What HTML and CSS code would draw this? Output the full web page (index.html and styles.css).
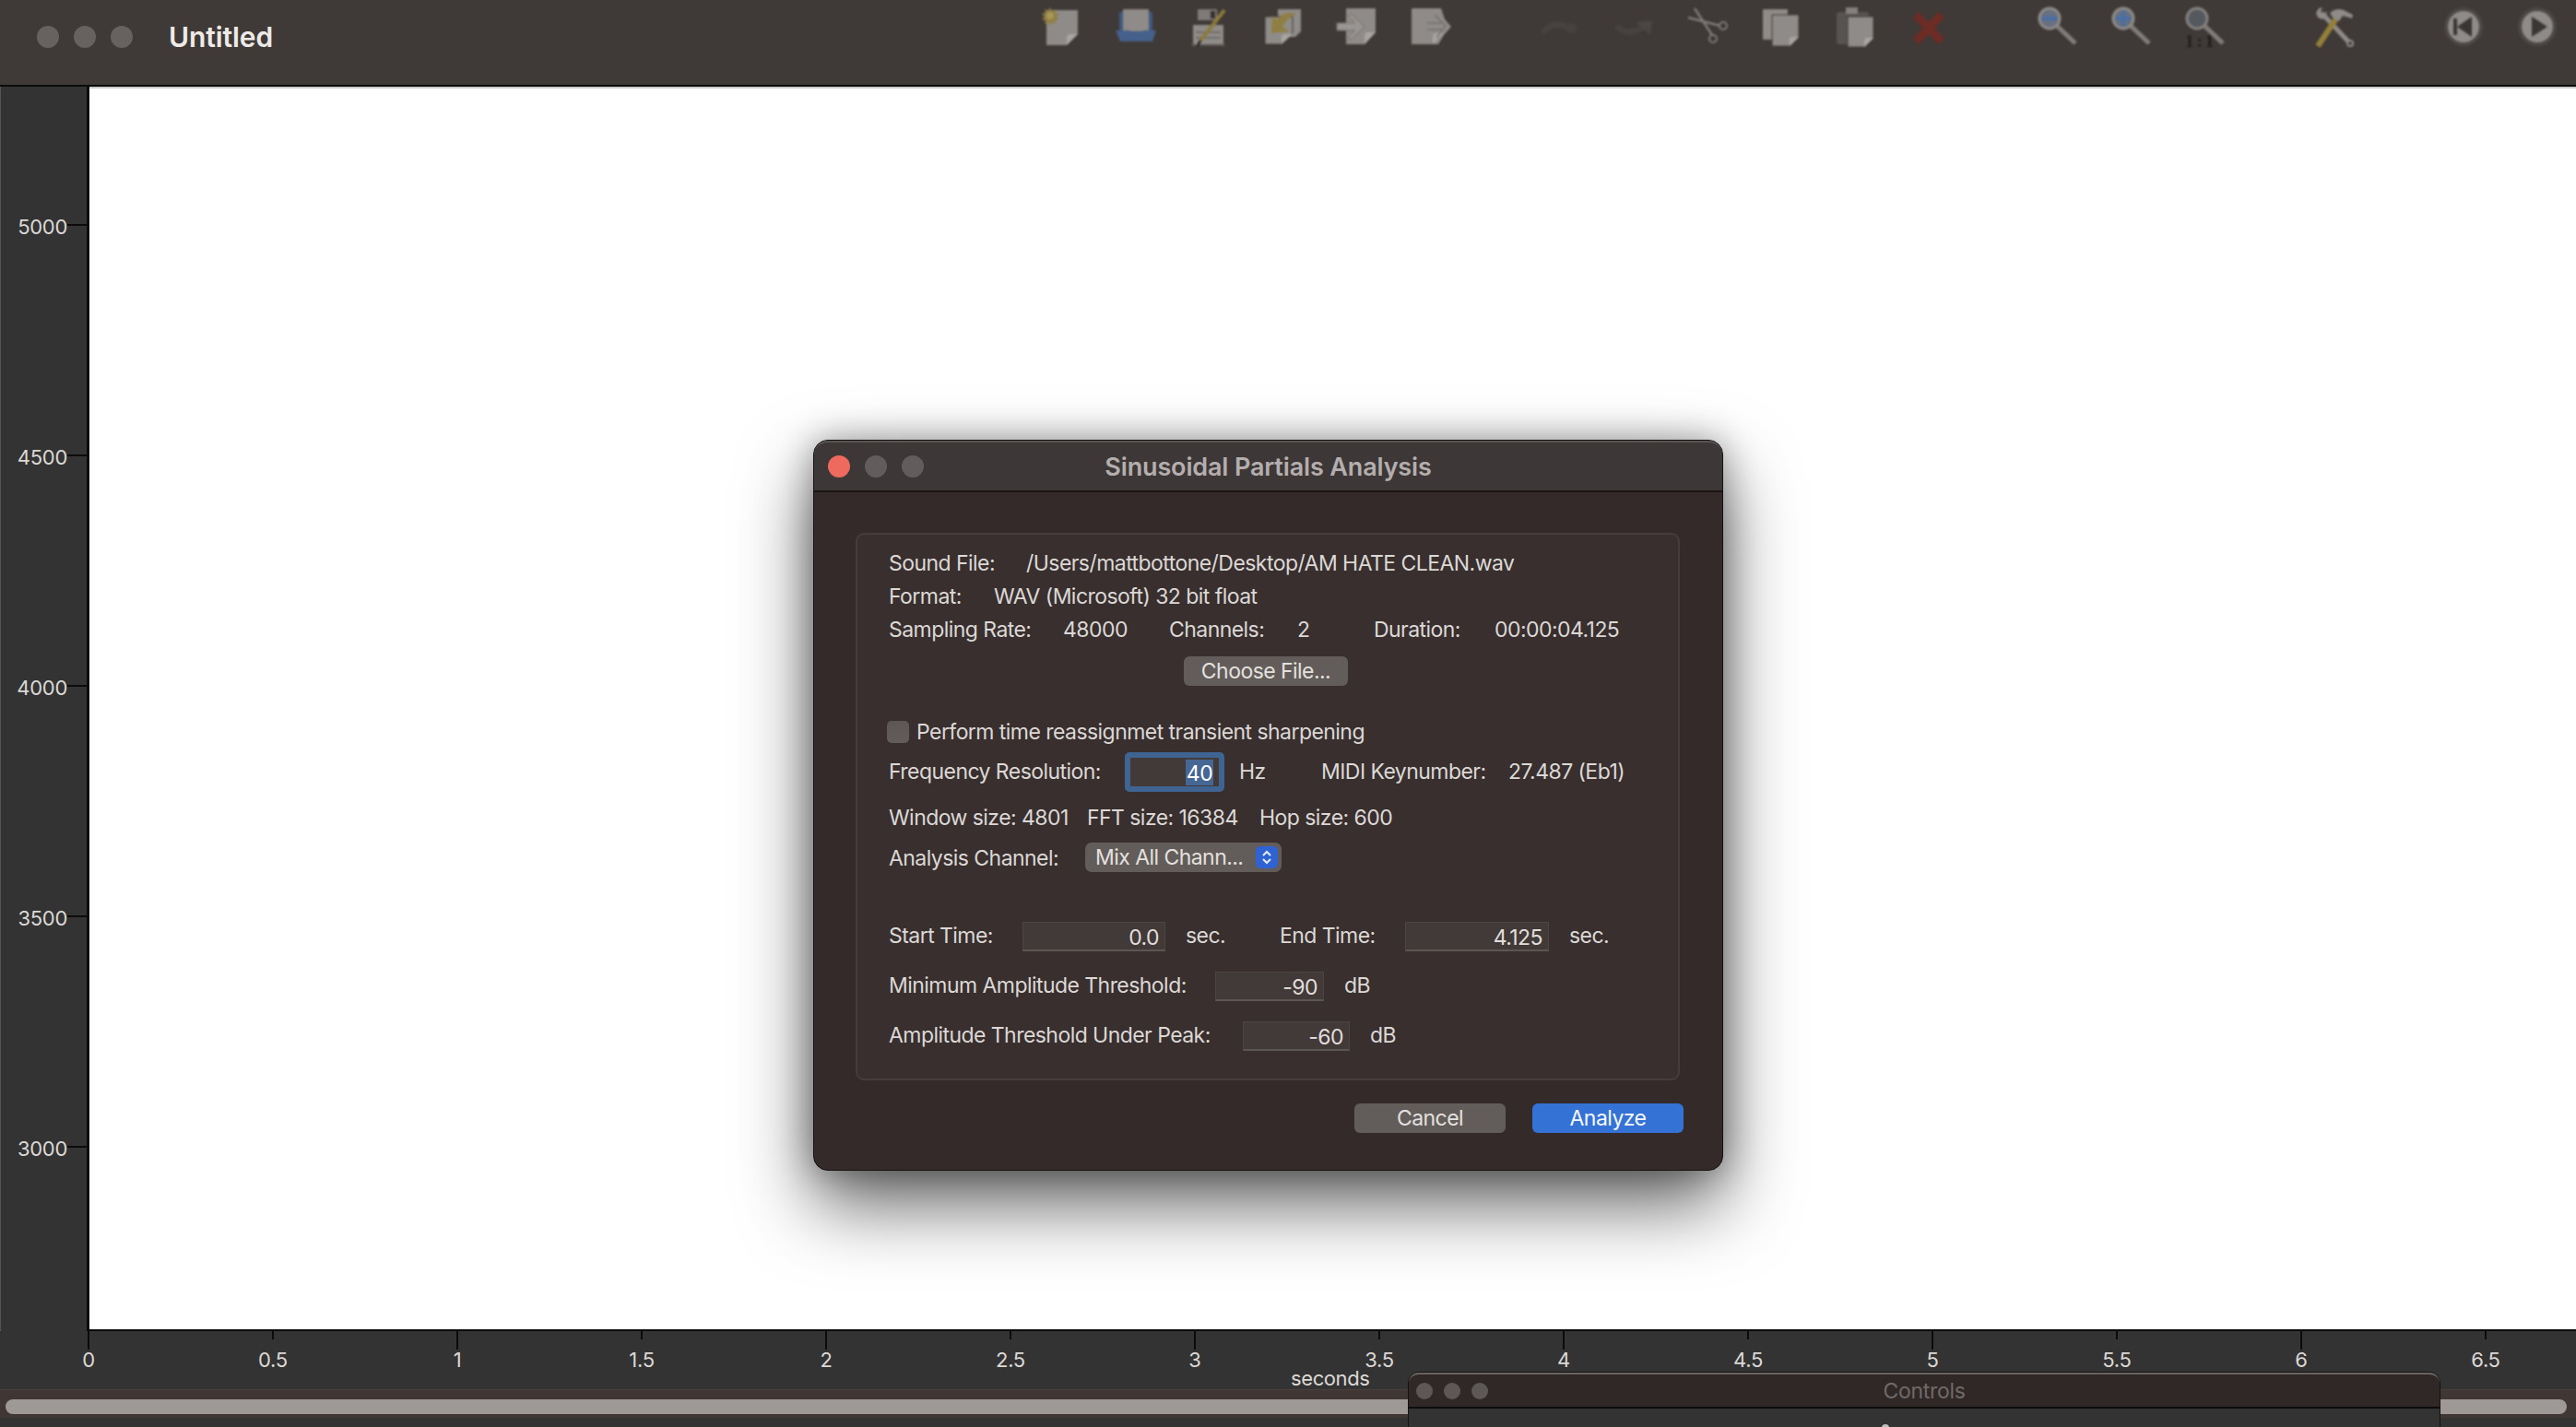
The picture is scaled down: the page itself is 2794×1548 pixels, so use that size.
FILE: index.html
```html
<!DOCTYPE HTML>
<html>
<head>
    <meta http-equiv="Content-Type" content="text/html; charset=UTF-8"/>
    <title>Untitled</title>
    <link rel="stylesheet" href="styles.css">
</head>
<body>

<div class="titlebar">
    <div class="lights">
        <span class="light"></span><span class="light"></span><span class="light"></span>
    </div>
    <div class="docname">Untitled</div>

    <div class="toolbar">
        <div class="toolgroup">
            <!-- new -->
            <svg class="tool" viewBox="0 0 44 44">
                <path class="page" d="M5 3H39V29L27 41H5Z"/>
                <path class="fold" d="M39 29L27 41V33Q27 29 31 29Z"/>
                <path fill="#8f7f42" d="M9 0l2 4 4-2-1 4 5 1-4 3 4 3-5 1 1 4-4-2-2 4-2-4-4 2 1-4-4-1 3-3-3-3 4-1-1-4 4 2z"/>
                <circle cx="9" cy="9" r="4" fill="#a8975a"/>
            </svg>
            <!-- open -->
            <svg class="tool" viewBox="0 0 44 44">
                <rect x="4" y="5" width="36" height="24" fill="#41597f"/>
                <rect x="8" y="2" width="28" height="24" class="page"/>
                <path fill="#46608c" d="M0 25H15L17 27H28L30 25H44L40 37H5Z"/>
            </svg>
            <!-- save as -->
            <svg class="tool" viewBox="0 0 44 44">
                <rect x="9" y="2" width="21" height="12" fill="#7e7a77"/>
                <rect x="23" y="4" width="5" height="8" fill="#353130"/>
                <rect x="4" y="19" width="33" height="23" class="page"/>
                <path d="M7 27H34M7 33H34" stroke="#6a6663" stroke-width="1.5"/>
                <rect x="2" y="40" width="37" height="2" fill="#5a5653"/>
                <path d="M38 3L12 36" stroke="#8c7a3c" stroke-width="4"/>
                <path d="M12 36L9 42" stroke="#26211f" stroke-width="2.5"/>
            </svg>
            <!-- revert -->
            <svg class="tool" viewBox="0 0 44 44">
                <path class="page" d="M16 2H41V26L35 32H16Z"/>
                <path class="page" stroke="#3f3a37" d="M2 10H32V28L20 40H2Z"/>
                <path class="fold" d="M32 29L20 40V33Q20 29 24 29Z"/>
                <path fill="#8f7f42" d="M36 7Q22 3 15 14L10 9 9 28 28 26 21 21Q26 11 36 7Z"/>
            </svg>
            <!-- import -->
            <svg class="tool" viewBox="0 0 44 44">
                <path class="page" d="M10 1H42V27L30 40H10Z"/>
                <path class="fold" d="M42 27L30 40V31Q30 27 34 27Z"/>
                <path d="M0 17H20L12 9 15 7 30 21 15 35 12 33 20 25H0Z" fill="#9a9693" stroke="#74706d" stroke-width="1"/>
            </svg>
            <!-- export -->
            <svg class="tool" viewBox="0 0 44 44">
                <path class="page" d="M1 1H33L37 13 44 21 36 30 30 40H1Z"/>
                <path class="fold" d="M36 28L24 40V32Q24 28 28 28Z"/>
                <path d="M18 17H35M18 24H35M26 8L38 20 28 33" fill="none" stroke="#74706d" stroke-width="1.5"/>
            </svg>
        </div>

        <div class="toolgroup">
            <!-- undo -->
            <svg class="tool" viewBox="0 0 44 44">
                <path d="M3 28Q17 10 36 26" fill="none" stroke="#46423f" stroke-width="7"/>
                <path d="M30 16L41 20 38 31Z" fill="#46423f"/>
            </svg>
            <!-- redo -->
            <svg class="tool" viewBox="0 0 44 44">
                <path d="M3 20Q14 32 32 22" fill="none" stroke="#46423f" stroke-width="7"/>
                <path d="M24 16L42 14 40 30Z" fill="#4a4643"/>
            </svg>
            <!-- cut -->
            <svg class="tool" viewBox="0 0 44 44">
                <path d="M8 1L27 30M1 11L36 20" fill="none" stroke="#7d7976" stroke-width="2.5"/>
                <circle cx="39" cy="20" r="4" fill="none" stroke="#7d7976" stroke-width="2"/>
                <circle cx="28" cy="34" r="4" fill="none" stroke="#7d7976" stroke-width="2"/>
            </svg>
            <!-- copy -->
            <svg class="tool" viewBox="0 0 44 44">
                <path class="page" d="M2 2H29V35H2Z"/>
                <path class="page" stroke="#3f3a37" d="M12 8H41V33L32 42H12Z"/>
                <path class="fold" d="M41 32L31 42V35Q31 32 34 32Z"/>
            </svg>
            <!-- paste -->
            <svg class="tool" viewBox="0 0 44 44">
                <rect x="2" y="5" width="35" height="35" rx="3" fill="#575350"/>
                <rect x="12" y="0" width="13" height="7" fill="#85817e"/>
                <path class="page" stroke="#3f3a37" d="M14 10H42V34L33 43H14Z"/>
                <path class="fold" d="M42 33L32 43V36Q32 33 35 33Z"/>
            </svg>
            <!-- delete -->
            <svg class="tool" viewBox="0 0 44 44">
                <path d="M8 8L36 37M36 8L8 37" stroke="#6d2c25" stroke-width="9"/>
            </svg>
        </div>

        <div class="toolgroup">
            <!-- zoom out -->
            <svg class="tool" viewBox="0 0 44 44">
                <path class="handle" d="M21 20L41 39"/>
                <circle class="lens" cx="13" cy="12" r="11"/>
                <rect x="5" y="10" width="16" height="4" fill="#4a6ea6"/>
            </svg>
            <!-- zoom in -->
            <svg class="tool" viewBox="0 0 44 44">
                <path class="handle" d="M21 20L41 39"/>
                <circle class="lens" cx="13" cy="12" r="11"/>
                <path d="M5 12H21M13 4V20" stroke="#4a6ea6" stroke-width="4"/>
            </svg>
            <!-- zoom 1:1 -->
            <svg class="tool" viewBox="0 0 44 44">
                <text x="0" y="43" class="oneone">1:1</text>
                <path class="handle" d="M21 20L41 39"/>
                <circle cx="13" cy="12" r="11" fill="#54595f" stroke="#85817e" stroke-width="3"/>
            </svg>
        </div>

        <div class="toolgroup">
            <!-- settings -->
            <svg class="tool" viewBox="0 0 44 44">
                <path d="M8 6L38 38" stroke="#8f8b88" stroke-width="5"/>
                <circle cx="39" cy="39" r="3" fill="#3f3a37" stroke="#8f8b88" stroke-width="2"/>
                <path d="M2 6L5 1 9 0 7 5 11 7 14 4 13 10 9 13 4 11Z" fill="#8f8b88"/>
                <path d="M4 42L24 12" stroke="#94803b" stroke-width="6"/>
                <path d="M17 6Q24 0 32 3L42 8 41 12 31 9 27 15 20 11Z" fill="#8f8b88"/>
            </svg>
        </div>

        <div class="toolgroup">
            <!-- rewind -->
            <svg class="tool" viewBox="0 0 44 44">
                <circle cx="22" cy="21" r="21" fill="#4c4845"/>
                <circle cx="22" cy="21" r="17" class="page"/>
                <rect x="11" y="12" width="4" height="18" fill="#3a3634"/>
                <path d="M31 10V32L15 21Z" fill="#3a3634"/>
            </svg>
            <!-- play -->
            <svg class="tool" viewBox="0 0 44 44">
                <circle cx="22" cy="21" r="21" fill="#4c4845"/>
                <circle cx="22" cy="21" r="17" class="page"/>
                <path d="M16 10V32L33 21Z" fill="#3a3634"/>
            </svg>
        </div>
    </div>
</div>

<div class="plotrow">
    <div class="yaxis">
        <div class="ytick"><span>5000</span><i></i></div>
        <div class="ytick"><span>4500</span><i></i></div>
        <div class="ytick"><span>4000</span><i></i></div>
        <div class="ytick"><span>3500</span><i></i></div>
        <div class="ytick"><span>3000</span><i></i></div>
    </div>
    <div class="plot"></div>
</div>

<div class="xaxis">
    <div class="xtick big"><i></i><span>0</span></div>
    <div class="xtick"><i></i><span>0.5</span></div>
    <div class="xtick big"><i></i><span>1</span></div>
    <div class="xtick"><i></i><span>1.5</span></div>
    <div class="xtick big"><i></i><span>2</span></div>
    <div class="xtick"><i></i><span>2.5</span></div>
    <div class="xtick big"><i></i><span>3</span></div>
    <div class="xtick"><i></i><span>3.5</span></div>
    <div class="xtick big"><i></i><span>4</span></div>
    <div class="xtick"><i></i><span>4.5</span></div>
    <div class="xtick big"><i></i><span>5</span></div>
    <div class="xtick"><i></i><span>5.5</span></div>
    <div class="xtick big"><i></i><span>6</span></div>
    <div class="xtick"><i></i><span>6.5</span></div>
</div>
<div class="xlabel">seconds</div>

<div class="scrolltrack"><div class="scrollthumb"></div></div>

<!-- analysis dialog -->
<div class="dialog">
    <div class="dlgtitle">
        <div class="dlglights">
            <span class="dlglight close"></span><span class="dlglight"></span><span class="dlglight"></span>
        </div>
        <div class="dlgname">Sinusoidal Partials Analysis</div>
    </div>

    <div class="groupbox">
        <div class="row info"><span class="w149">Sound File:</span><span>/Users/mattbottone/Desktop/AM HATE CLEAN.wav</span></div>
        <div class="row info"><span class="w114">Format:</span><span>WAV (Microsoft) 32 bit float</span></div>
        <div class="row info">
            <span class="w189">Sampling Rate:</span><span class="w115">48000</span>
            <span class="w139">Channels:</span><span class="w83">2</span>
            <span class="w131">Duration:</span><span>00:00:04.125</span>
        </div>
        <div class="row choose"><button class="btn choosebtn">Choose File...</button></div>

        <div class="row check"><span class="checkbox"></span><span>Perform time reassignmet transient sharpening</span></div>

        <div class="row freq">
            <span class="w256">Frequency Resolution:</span>
            <div class="field focused"><span class="selected">40</span></div>
            <span class="unit w89">Hz</span>
            <span class="w203">MIDI Keynumber:</span><span>27.487 (Eb1)</span>
        </div>

        <div class="row sizes"><span class="w215">Window size: 4801</span><span class="w187">FFT size: 16384</span><span>Hop size: 600</span></div>

        <div class="row channel">
            <span class="w213">Analysis Channel:</span>
            <div class="popup">
                <span>Mix All Chann...</span>
                <div class="stepper">
                    <svg viewBox="0 0 24 24"><path d="M8 10L12 6 16 10M8 14L12 18 16 14" fill="none" stroke="#e6ecf8" stroke-width="2"/></svg>
                </div>
            </div>
        </div>

        <div class="row times">
            <span class="w145">Start Time:</span><div class="field w155">0.0</div><span class="unit w102">sec.</span>
            <span class="w136">End Time:</span><div class="field w156">4.125</div><span class="unit">sec.</span>
        </div>
        <div class="row thresh">
            <span class="w354">Minimum Amplitude Threshold:</span><div class="field w118">-90</div><span class="unit">dB</span>
        </div>
        <div class="row thresh">
            <span class="w384">Amplitude Threshold Under Peak:</span><div class="field w116">-60</div><span class="unit">dB</span>
        </div>
    </div>

    <div class="dlgbuttons">
        <button class="btn cancel">Cancel</button>
        <button class="btn analyze">Analyze</button>
    </div>
</div>

<!-- controls window, cut off by the bottom of the screen -->
<div class="controls">
    <div class="ctltitle">
        <div class="ctllights"><span></span><span></span><span></span></div>
        <div class="ctlname">Controls</div>
    </div>
    <div class="ctlbody"><span class="ctldot"></span></div>
</div>

</body>
</html>
```

FILE: styles.css
```css
html, body {
    margin: 0;
    padding: 0;
}

body {
    position: relative;
    width: 2794px;
    height: 1548px;
    overflow: hidden;
    background: #333333;
    font-family: "Inter", "Liberation Sans", sans-serif;
    color: #dcd8d6;
}

/* ---- main window title bar ---- */
.titlebar {
    display: flex;
    align-items: flex-start;
    height: 92px;
    background: #3f3a37;
    border-bottom: 2px solid #0b0b0b;
    box-sizing: content-box;
}

.lights {
    display: flex;
    gap: 16px;
    padding: 28px 0 0 40px;
}

.light {
    width: 24px;
    height: 24px;
    border-radius: 50%;
    background: #67625f;
}

.docname {
    margin: 22px 0 0 39px;
    font-size: 30px;
    line-height: 36px;
    font-weight: 600;
    letter-spacing: -0.1px;
    color: #eeeae8;
}

.toolbar {
    display: flex;
    gap: 96px;
    margin-left: auto;
    padding: 8px 20px 0 0;
}

.toolgroup {
    display: flex;
    gap: 36px;
}

.tool {
    width: 44px;
    height: 44px;
    overflow: visible;
    filter: blur(1.1px);
}

.page {
    fill: #8f8b88;
}

.fold {
    fill: #a9a5a2;
}

.lens {
    fill: #66707f;
    stroke: #8f8b88;
    stroke-width: 3;
}

.handle {
    fill: none;
    stroke: #807c79;
    stroke-width: 5;
}

.oneone {
    font-family: "Liberation Serif", serif;
    font-size: 19px;
    font-weight: 700;
    letter-spacing: 3px;
    fill: #1f1c1a;
}

/* ---- plot ---- */
.plotrow {
    display: flex;
    height: 1350px;
}

.yaxis {
    width: 97px;
    padding-top: 25px;
    border-right: 3px solid #0b0b0b;
    border-left: 1px solid #555555;
    box-sizing: border-box;
    flex: none;
}

.ytick {
    display: flex;
    align-items: center;
    justify-content: flex-end;
    height: 250px;
}

.ytick span {
    font-size: 22px;
    line-height: 26px;
    position: relative;
    top: 2px;
    letter-spacing: -0.3px;
}

.ytick i {
    width: 21px;
    height: 2px;
    background: #0b0b0b;
}

.plot {
    flex: 1;
    background: #ffffff;
    border-top: 2px solid #c9c9c9;
    border-bottom: 2px solid #0b0b0b;
}

.xaxis {
    display: flex;
    margin-left: -4px;
}

.xtick {
    display: flex;
    flex-direction: column;
    align-items: center;
    flex: none;
    width: 200px;
}

.xtick i {
    width: 2px;
    height: 9px;
    margin-bottom: 11px;
    background: #0b0b0b;
}

.xtick.big i {
    height: 20px;
    margin-bottom: 0;
}

.xtick span {
    font-size: 22px;
    line-height: 22px;
    letter-spacing: -0.3px;
}

.xlabel {
    margin: -2px 0 0 1400px;
    font-size: 22px;
    line-height: 22px;
    letter-spacing: -0.4px;
}

.scrolltrack {
    height: 31px;
    margin-top: 1px;
    padding: 10px 10px 0 6px;
    background: #403633;
    border-top: 1px solid #4a403d;
    box-sizing: border-box;
}

.scrollthumb {
    height: 16px;
    border-radius: 8px;
    background: #9e9997;
}

/* ---- analysis dialog ---- */
.dialog {
    position: absolute;
    left: 882px;
    top: 477px;
    width: 987px;
    height: 793px;
    box-sizing: border-box;
    background: #332a29;
    border: 1px solid #151212;
    border-radius: 16px;
    box-shadow: 0 36px 80px rgba(0, 0, 0, 0.62), 0 0 36px rgba(0, 0, 0, 0.32);
    font-size: 23px;
    letter-spacing: -0.55px;
}

.dlgtitle {
    position: relative;
    display: flex;
    align-items: center;
    justify-content: center;
    height: 56px;
    box-sizing: border-box;
    background: #3d3837;
    border-bottom: 2px solid #191514;
    border-top: 2px solid #5a5553;
    border-radius: 15px 15px 0 0;
}

.dlglights {
    position: absolute;
    left: 15px;
    top: 14px;
    display: flex;
    gap: 16px;
}

.dlglight {
    width: 24px;
    height: 24px;
    border-radius: 50%;
    background: #625d5c;
}

.dlglight.close {
    background: #ee6a5f;
}

.dlgname {
    font-size: 27px;
    font-weight: 600;
    letter-spacing: -0.15px;
    color: #b5aeae;
}

.groupbox {
    width: 894px;
    height: 594px;
    margin: 44px 0 0 45px;
    padding: 12px 0 0 34px;
    box-sizing: border-box;
    background: #382f2e;
    border: 2px solid #453d3c;
    border-radius: 9px;
}

.row {
    display: flex;
    white-space: nowrap;
}

.row > span {
    flex: none;
}

.info {
    height: 36px;
    line-height: 38px;
}

.choose {
    margin-top: 12px;
    padding-left: 320px;
}

.check {
    align-items: center;
    height: 24px;
    margin-top: 38px;
    margin-left: -2px;
}

.freq {
    height: 43px;
    line-height: 42px;
    margin-top: 10px;
}

.sizes {
    height: 36px;
    line-height: 38px;
    margin-top: 9px;
}

.channel {
    height: 32px;
    line-height: 34px;
    margin-top: 10px;
}

.times {
    height: 32px;
    line-height: 30px;
    margin-top: 54px;
}

.thresh {
    height: 32px;
    line-height: 30px;
    margin-top: 22px;
}

.w83 { width: 83px; }
.w89 { width: 89px; }
.w102 { width: 102px; }
.w114 { width: 114px; }
.w115 { width: 115px; }
.w116 { width: 116px; }
.w118 { width: 118px; }
.w131 { width: 131px; }
.w136 { width: 136px; }
.w139 { width: 139px; }
.w145 { width: 145px; }
.w149 { width: 149px; }
.w155 { width: 155px; }
.w156 { width: 156px; }
.w187 { width: 187px; }
.w189 { width: 189px; }
.w203 { width: 203px; }
.w213 { width: 213px; }
.w215 { width: 215px; }
.w256 { width: 256px; }
.w354 { width: 354px; }
.w384 { width: 384px; }

.checkbox {
    width: 24px;
    height: 24px;
    margin-right: 8px;
    border-radius: 5px;
    background: linear-gradient(#5c5756, #625d5b);
}

.field {
    flex: none;
    height: 32px;
    padding-right: 6px;
    box-sizing: border-box;
    background: #413a38;
    border: 1px solid #4b4543;
    border-bottom: 2px solid #5b5654;
    line-height: 33px;
    text-align: right;
    color: #e2dedc;
}

.field.focused {
    width: 108px;
    height: 43px;
    padding-right: 6px;
    border: 6px solid #3f6491;
    border-radius: 5px;
    line-height: 31px;
}

.selected {
    display: inline-block;
    width: 30px;
    height: 28px;
    margin-top: 2px;
    background: #466693;
    color: #ffffff;
    line-height: 30px;
    text-align: center;
    vertical-align: top;
}

.unit {
    margin-left: 16px;
}

.times .unit,
.thresh .unit {
    margin-left: 22px;
}

.popup {
    display: flex;
    align-items: center;
    justify-content: space-between;
    flex: none;
    width: 213px;
    height: 32px;
    padding: 0 4px 0 11px;
    box-sizing: border-box;
    border-radius: 7px;
    background: #625d5b;
    color: #e4e0de;
}

.stepper {
    width: 24px;
    height: 24px;
    border-radius: 5px;
    background: #2f62d2;
}

.stepper svg {
    display: block;
    width: 24px;
    height: 24px;
}

.btn {
    display: block;
    height: 32px;
    padding: 0;
    border: none;
    border-radius: 6px;
    background: #625d5b;
    font-family: inherit;
    font-size: 23px;
    letter-spacing: -0.55px;
    line-height: 32px;
    color: #e4e0de;
}

.choosebtn {
    width: 178px;
}

.dlgbuttons {
    display: flex;
    justify-content: flex-end;
    gap: 29px;
    margin: 25px 42px 0 0;
}

.cancel,
.analyze {
    width: 164px;
}

.analyze {
    background: #3572d6;
    color: #f4f7fc;
}

/* ---- controls window ---- */
.controls {
    position: absolute;
    left: 1527px;
    top: 1488px;
    width: 1120px;
    height: 120px;
    box-sizing: border-box;
    background: #333333;
    border: 1px solid #151212;
    border-radius: 12px 12px 0 0;
}

.ctltitle {
    position: relative;
    display: flex;
    align-items: center;
    justify-content: center;
    height: 39px;
    box-sizing: border-box;
    background: #302827;
    border-top: 2px solid #6a6563;
    border-bottom: 2px solid #0e0c0c;
    border-radius: 11px 11px 0 0;
}

.ctllights {
    position: absolute;
    left: 8px;
    top: 9px;
    display: flex;
    gap: 12px;
}

.ctllights span {
    width: 18px;
    height: 18px;
    border-radius: 50%;
    background: #5d5856;
}

.ctlname {
    font-size: 23px;
    letter-spacing: -0.3px;
    color: #6f6a68;
}

.ctlbody {
    display: flex;
    justify-content: center;
    padding: 17px 85px 0 0;
}

.ctldot {
    width: 8px;
    height: 8px;
    border-radius: 50%;
    background: #c4c0be;
}
```
